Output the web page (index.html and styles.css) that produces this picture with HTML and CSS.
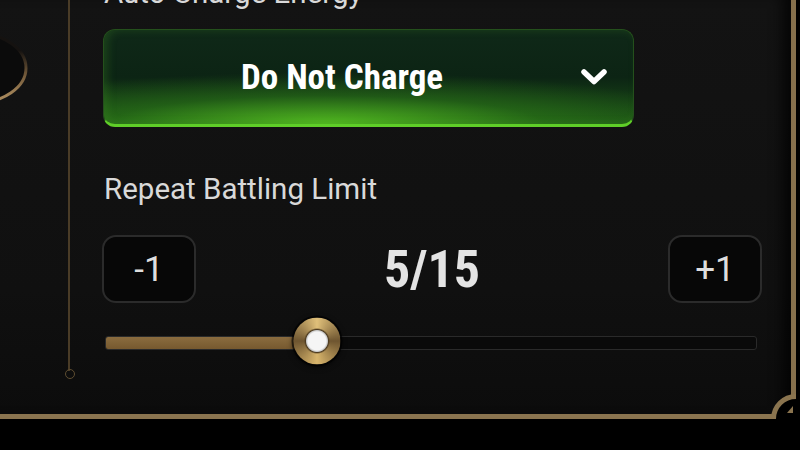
FILE: index.html
```html
<!DOCTYPE html>
<html lang="en">

<head>
    <title>Repeat Battle</title>
    <meta charset="UTF-8">
    <meta name="viewport" content="width=device-width, initial-scale=1">
    <link rel="stylesheet" href="styles.css">
</head>

<body>
    <div class="panel">
        <div class="side">
            <svg class="arc" width="40" height="80" viewBox="0 0 40 80">
                <defs>
                    <linearGradient id="arcGold" x1="0" y1="0" x2="0" y2="1">
                        <stop offset="0.25" stop-color="#151210"/>
                        <stop offset="0.6" stop-color="#735a3a"/>
                        <stop offset="0.9" stop-color="#a5865a"/>
                    </linearGradient>
                </defs>
                <ellipse cx="-25" cy="38" rx="51" ry="35" fill="#0b0b0b" stroke="url(#arcGold)" stroke-width="3"/>
            </svg>
            <div class="rail"></div>
        </div>

        <div class="main">
            <div class="label">Auto Charge Energy</div>

            <div class="select">
                <span class="select-text">Do Not Charge</span>
                <svg class="chevron" width="28" height="18" viewBox="0 0 28 18">
                    <polyline points="4,4 14,13.5 24,4" fill="none" stroke="#fff" stroke-width="5.5" stroke-linecap="round" stroke-linejoin="round"/>
                </svg>
            </div>

            <div class="label second">Repeat Battling Limit</div>

            <div class="stepper">
                <div class="step">-1</div>
                <div class="count">5/15</div>
                <div class="step">+1</div>
            </div>

            <div class="slider">
                <div class="fill" style="width: 32.4%"></div>
                <div class="thumb" style="left: 32.4%"></div>
            </div>
        </div>

        <svg class="corner" width="25" height="25" viewBox="0 0 25 25">
            <circle cx="25" cy="25" r="22.5" fill="#000" stroke="#8a744f" stroke-width="5"/>
            <polygon points="16,19 22,19 22,12" fill="#8a744f"/>
        </svg>
    </div>
</body>

</html>
```

FILE: styles.css
```css
* {
    box-sizing: border-box;
}

body {
    margin: 0;
    width: 800px;
    height: 450px;
    overflow: hidden;
    background: #000;
    font-family: Roboto, "Noto Sans", sans-serif;
}

.panel {
    position: relative;
    display: flex;
    width: 796px;
    height: 419px;
    background: linear-gradient(#131313, #101010 70%, #0c0c0c);
    border-right: 5px solid #86704c;
    border-bottom: 5px solid #8a744f;
    box-shadow: inset -16px 0 14px -8px rgba(0, 0, 0, 0.75);
}

.side {
    position: relative;
    flex: none;
    width: 102px;
}

.arc {
    position: absolute;
    left: 0;
    top: 30px;
}

.rail {
    position: relative;
    width: 2px;
    height: 371px;
    margin-left: 68px;
    background: #4a3c27;
}

.rail::after {
    content: "";
    position: absolute;
    left: -3px;
    bottom: -8px;
    width: 8px;
    height: 8px;
    border: 1.5px solid #5e4d31;
    border-radius: 50%;
}

.main {
    display: flex;
    flex-direction: column;
    width: 660px;
    margin-top: -24px;
}

.label {
    margin-left: 2px;
    font-size: 29.5px;
    line-height: 34px;
    color: #d9d9d9;
}

.label.second {
    margin-top: 45px;
}

.select {
    display: flex;
    align-items: center;
    width: 531px;
    height: 98px;
    margin-top: 19px;
    margin-left: 1px;
    padding-right: 25px;
    border: 1px solid #24501c;
    border-bottom: 3px solid #5fce28;
    border-radius: 12px;
    background:
        radial-gradient(75% 55% at 42% 100%, rgba(100, 220, 36, 0.75), rgba(55, 150, 25, 0.35) 55%, transparent 100%),
        linear-gradient(180deg, #0f2818 0%, #0c2414 50%, #1d5416 100%);
    box-shadow: inset 4px 0 8px rgba(70, 150, 40, 0.25);
}

.select-text {
    flex: 1;
    text-align: center;
    font-size: 35px;
    font-weight: 700;
    font-stretch: 80%;
    color: #fff;
}

.stepper {
    display: flex;
    align-items: center;
    justify-content: space-between;
    height: 68px;
    margin-top: 29px;
}

.step {
    display: flex;
    align-items: center;
    justify-content: center;
    width: 94px;
    height: 68px;
    border: 2px solid #2b2b2b;
    border-radius: 14px;
    background: #070707;
    font-size: 35px;
    color: #dedede;
}

.count {
    font-size: 52px;
    font-weight: 700;
    font-stretch: 80%;
    color: #e4e4e4;
}

.slider {
    position: relative;
    height: 14px;
    margin: 33px 5px 0 3px;
    border: 1px solid #2a2a2a;
    border-radius: 3px;
    background: #0a0a0a;
}

.fill {
    height: 100%;
    border-radius: 2px;
    background: linear-gradient(#8a6c3f, #76592f);
}

.thumb {
    position: absolute;
    top: 50%;
    width: 47px;
    height: 47px;
    margin-top: -2px;
    border-radius: 50%;
    transform: translate(-50%, -50%);
    background:
        radial-gradient(circle, #f5f5f5 0 9px, #c8c8c8 10.5px, #4d3b20 11.5px, transparent 13px),
        conic-gradient(#e0c07a, #6e5530 25%, #d8b56c 50%, #6e5530 75%, #e0c07a);
    box-shadow: 0 0 0 2px rgba(0, 0, 0, 0.6), 0 2px 6px rgba(0, 0, 0, 0.8);
}

.corner {
    position: absolute;
    right: -5px;
    bottom: -5px;
}
```
